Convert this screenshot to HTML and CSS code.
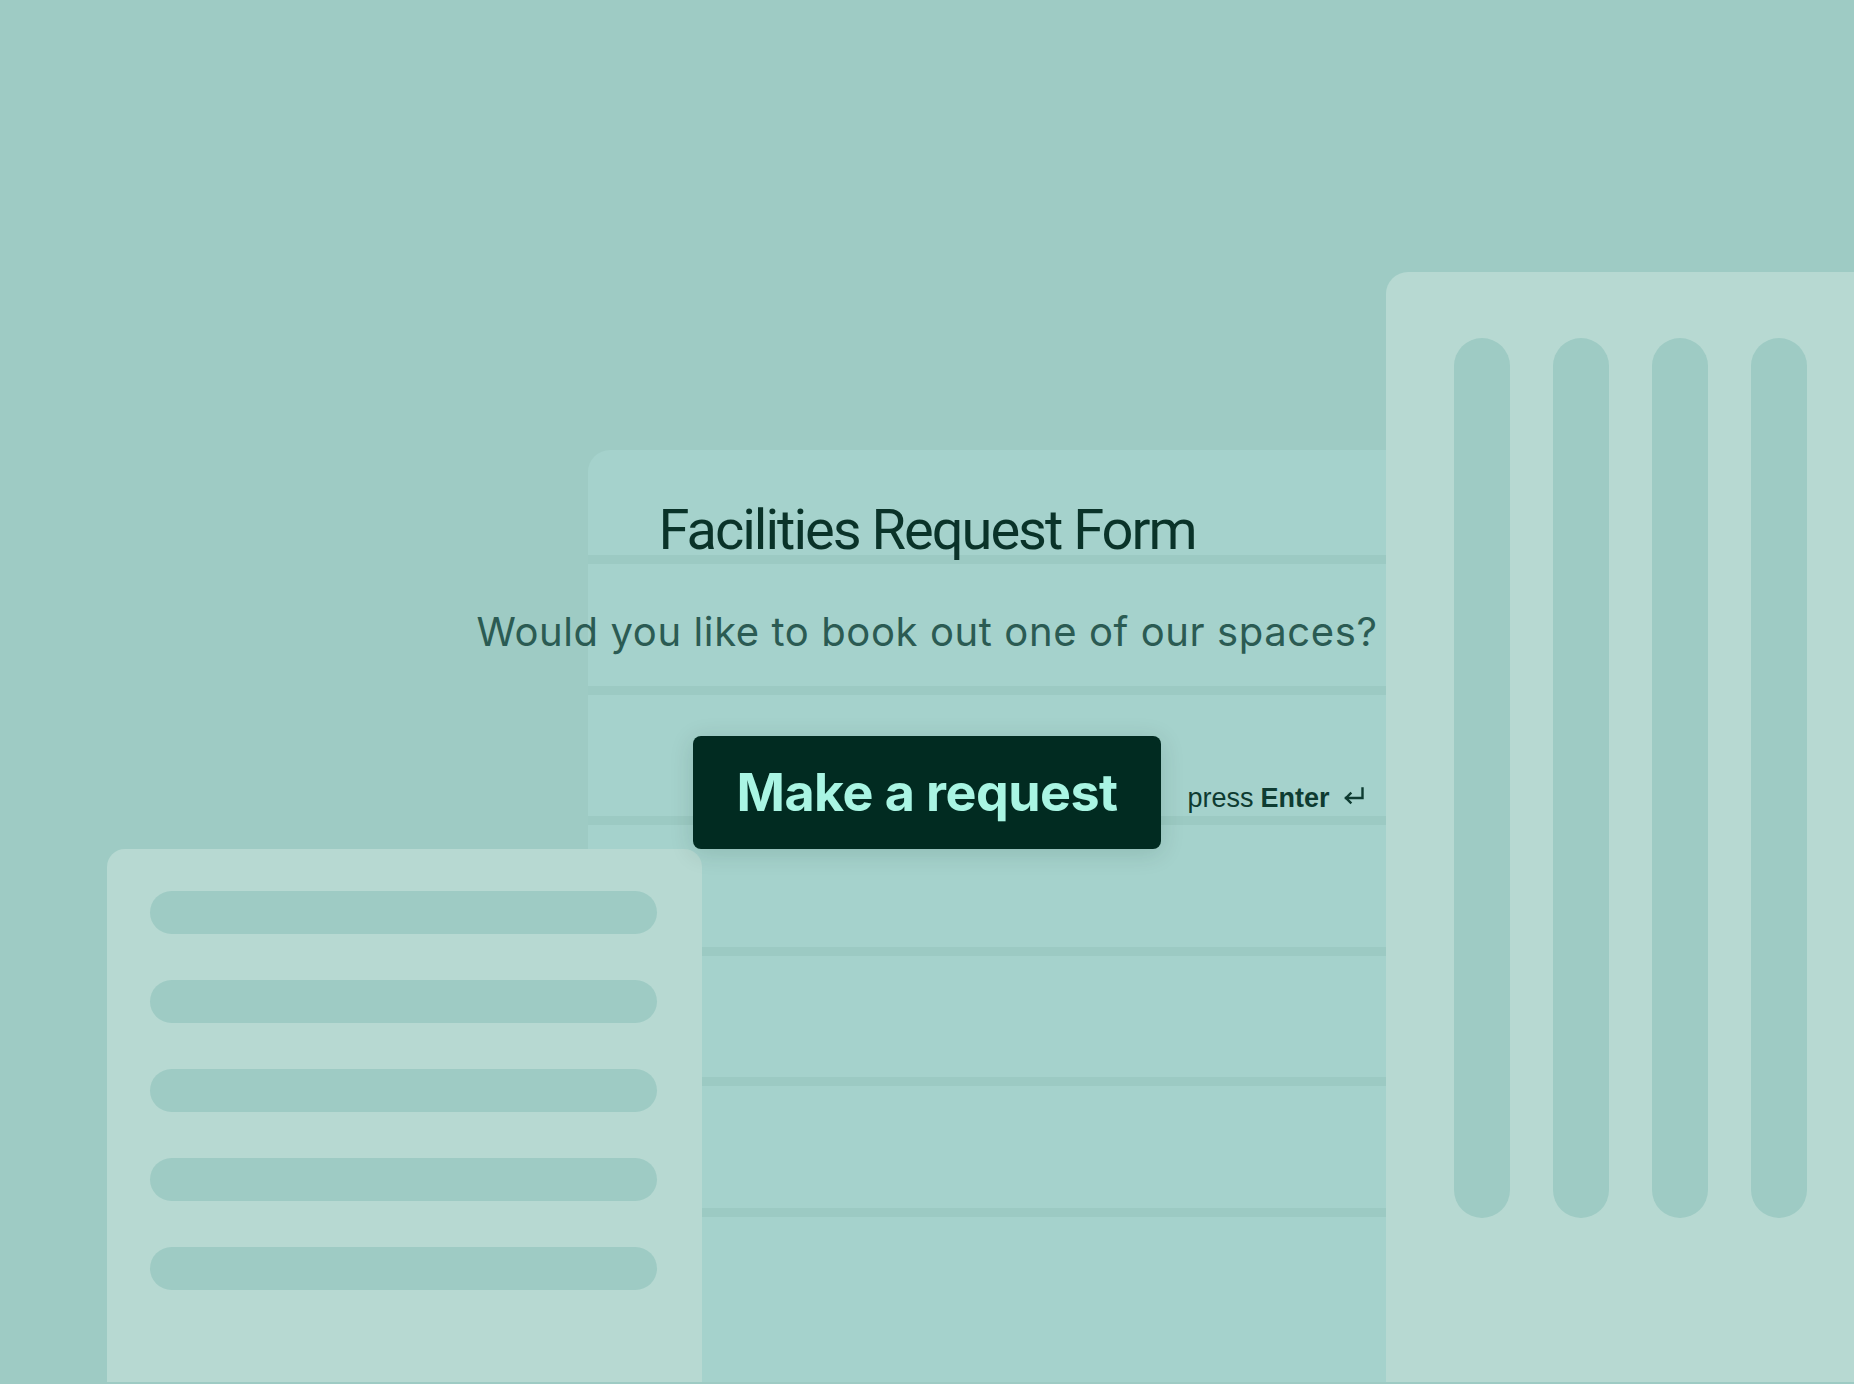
FILE: index.html
```html
<!DOCTYPE html>
<html lang="en">
<head>
    <meta charset="UTF-8">
    <meta name="viewport" content="width=device-width, initial-scale=1.0">
    <title>Facilities Request Form</title>
    <link rel="stylesheet" href="styles.css">
</head>
<body>
    <!-- Sfondo decorativo -->
    <div class="scene" aria-hidden="true">
        <div class="panel-form">
            <div class="stripe"></div>
            <div class="stripe"></div>
            <div class="stripe"></div>
            <div class="stripe"></div>
            <div class="stripe"></div>
            <div class="stripe"></div>
        </div>
        <div class="panel-list">
            <div class="pill"></div>
            <div class="pill"></div>
            <div class="pill"></div>
            <div class="pill"></div>
            <div class="pill"></div>
        </div>
        <div class="panel-columns">
            <div class="column"></div>
            <div class="column"></div>
            <div class="column"></div>
            <div class="column"></div>
        </div>
    </div>

    <main class="intro">
        <h1>Facilities Request Form</h1>
        <p class="subtitle">Would you like to book out one of our spaces?</p>
        <div class="actions">
            <button class="start-button">Make a request</button>
            <div class="hint">
                press <strong>Enter</strong>
                <svg width="22" height="18" viewBox="0 0 22 18" fill="none" stroke="currentColor" stroke-width="2.4" stroke-linecap="square">
                    <path d="M19.5 1.5 V11 H3"/>
                    <path d="M7.5 6.5 L3 11 L7.5 15.5"/>
                </svg>
            </div>
        </div>
    </main>
</body>
</html>
```

FILE: styles.css
```css
body {
    margin: 0;
    height: 1384px;
    overflow: hidden;
    position: relative;
    background: #9ecbc4;
    font-family: Inter, "Noto Sans", sans-serif;
}

/* Sfondo */
.scene {
    position: absolute;
    inset: 0;
}
.panel-form {
    position: absolute;
    left: 588px;
    top: 450px;
    width: 840px;
    bottom: 2px;
    background: #a5d2cc;
    border-radius: 22px 22px 0 0;
    padding-top: 105px;
    box-sizing: border-box;
    display: flex;
    flex-direction: column;
    gap: 121.5px;
}
.stripe {
    height: 9px;
    background: #9ccac3;
}
.panel-list {
    position: absolute;
    left: 107px;
    top: 849px;
    width: 595px;
    bottom: 2px;
    background: #b7d9d2;
    border-radius: 18px 18px 0 0;
    padding: 42px 45px 0 43px;
    box-sizing: border-box;
    display: flex;
    flex-direction: column;
    gap: 46px;
}
.pill {
    height: 43px;
    border-radius: 22px;
    background: #9ecbc4;
}
.panel-columns {
    position: absolute;
    left: 1386px;
    top: 272px;
    right: -30px;
    bottom: 2px;
    background: #b7d9d2;
    border-radius: 22px 22px 0 0;
    padding: 66px 0 0 68px;
    box-sizing: border-box;
    display: flex;
    gap: 43px;
}
.column {
    width: 56px;
    height: 880px;
    border-radius: 28px;
    background: #9ecbc4;
}

/* Contenuto */
.intro {
    position: relative;
    padding-top: 497px;
    display: flex;
    flex-direction: column;
    align-items: center;
}
h1 {
    margin: 0;
    font-family: Roboto, Inter, sans-serif;
    font-size: 56px;
    font-weight: 400;
    line-height: 66px;
    letter-spacing: -2px;
    color: #0a3329;
}
.subtitle {
    margin: 45px 0 0;
    font-size: 40px;
    line-height: 48px;
    letter-spacing: 0.6px;
    color: #2b5b53;
}
.actions {
    margin-top: 80px;
    width: 100%;
    display: grid;
    grid-template-columns: 1fr auto 1fr;
    align-items: center;
}
.start-button {
    grid-column: 2;
    height: 113px;
    padding: 0 44px;
    border: none;
    border-radius: 8px;
    background: #012b21;
    color: #a9f5e3;
    font-family: Inter, "Noto Sans", sans-serif;
    font-size: 52px;
    font-weight: 700;
    letter-spacing: -0.55px;
    box-shadow: 0 4px 24px rgba(0, 40, 30, 0.14);
    cursor: pointer;
}
.hint {
    grid-column: 3;
    margin: 10px 0 0 26px;
    font-family: "Liberation Sans", Arial, sans-serif;
    font-size: 27px;
    line-height: 30px;
    color: #0e3b31;
    display: flex;
    align-items: center;
    gap: 7px;
}
.hint svg {
    margin-left: 6px;
    margin-top: -4px;
}
```
